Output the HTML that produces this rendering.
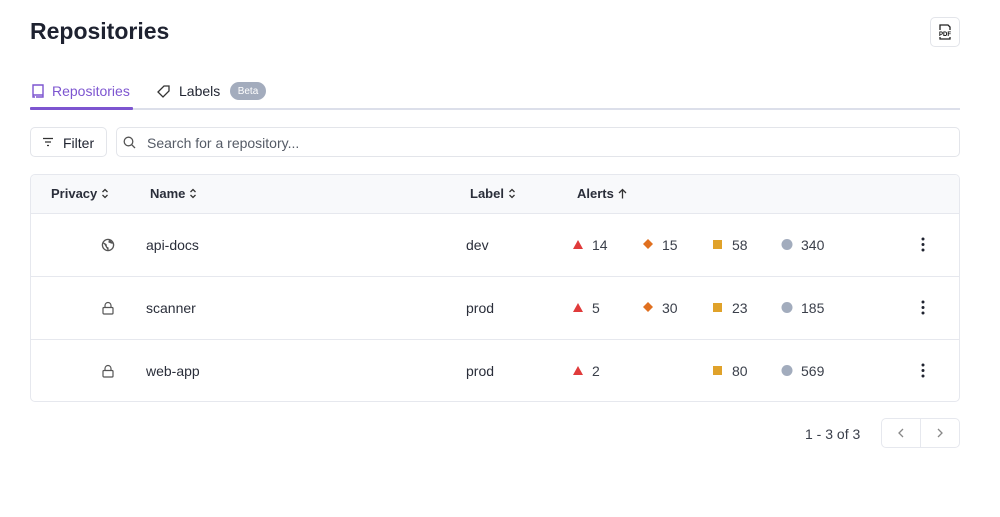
<!DOCTYPE html>
<html><head><style>
*{box-sizing:border-box;margin:0;padding:0}
body{width:1000px;height:517px;background:#fff;font-family:"Liberation Sans",sans-serif;color:#1f2330;position:relative;overflow:hidden}
.a{position:absolute}
h1{position:absolute;left:30px;top:18px;font-size:23px;font-weight:bold;color:#1e2230}
.t{font-size:14px}
.row{position:absolute;left:30px;width:930px;height:63px;border-top:1px solid #e6e8ee}
.c{position:absolute;top:0;line-height:62px;font-size:14px;color:#2a2e3a}
.hd{position:absolute;font-size:13px;font-weight:bold;color:#2a2e3a;top:186px}
.so{display:inline-block;vertical-align:-1px;margin-left:4px}
</style></head><body>
<h1>Repositories</h1>
<div class="a" style="left:930px;top:17px;width:30px;height:30px;border:1px solid #e3e5ea;border-radius:5px">
<svg width="30" height="30" viewBox="0 0 30 30" style="position:absolute;left:-1px;top:-1px"><path d="M10 13V8h8l2 2v3M10 20v2h10v-2" fill="none" stroke="#222" stroke-width="1.3"/><text x="15" y="19" font-size="6" font-weight="bold" text-anchor="middle" font-family="Liberation Sans">PDF</text></svg></div>

<svg class="a" style="left:30px;top:83px" width="16" height="16" viewBox="0 0 16 16"><path d="M3 2h10v10H3zM3 12v2h2M6 14h7v-2" fill="none" stroke="#7d55d0" stroke-width="1.4"/></svg>
<div class="a t" style="left:52px;top:83px;color:#7d55d0">Repositories</div>
<svg class="a" style="left:156px;top:83px" width="16" height="16" viewBox="0 0 16 16"><path d="M2 9l6-6h5v5l-6 6z" fill="none" stroke="#333" stroke-width="1.3"/></svg>
<div class="a t" style="left:179px;top:83px">Labels</div>
<div class="a" style="left:230px;top:82px;width:36px;height:18px;border-radius:9px;background:#a3acbd;color:#fff;font-size:10px;text-align:center;line-height:19px">Beta</div>
<div class="a" style="left:30px;top:108px;width:930px;height:2px;background:#dcdfea"></div>
<div class="a" style="left:30px;top:107px;width:103px;height:3px;background:#7d55d0;border-radius:1px"></div>

<div class="a" style="left:30px;top:127px;width:77px;height:30px;border:1px solid #e3e5ea;border-radius:5px"></div>
<svg class="a" style="left:42px;top:137px" width="12" height="10"><path d="M1 1.5h10M3 5h6M5 8.5h2" stroke="#333" stroke-width="1.3"/></svg>
<div class="a t" style="left:63px;top:135px">Filter</div>
<div class="a" style="left:116px;top:127px;width:844px;height:30px;border:1px solid #e3e5ea;border-radius:5px"></div>
<svg class="a" style="left:123px;top:136px" width="13" height="13"><circle cx="5.5" cy="5.5" r="4.3" fill="none" stroke="#555" stroke-width="1.3"/><path d="M8.7 8.7l3.3 3.3" stroke="#555" stroke-width="1.3"/></svg>
<div class="a t" style="left:147px;top:135px;color:#555b66">Search for a repository...</div>

<div class="a" style="left:30px;top:174px;width:930px;height:228px;border:1px solid #e6e8ee;border-radius:5px;overflow:hidden"><div style="height:39px;background:#f8f9fb"></div></div>
<div class="hd" style="left:51px">Privacy<svg class="so" width="8" height="11"><path d="M1.5 4L4 1.5 6.5 4M1.5 7L4 9.5 6.5 7" fill="none" stroke="#333" stroke-width="1.3"/></svg></div>
<div class="hd" style="left:150px">Name<svg class="so" width="8" height="11"><path d="M1.5 4L4 1.5 6.5 4M1.5 7L4 9.5 6.5 7" fill="none" stroke="#333" stroke-width="1.3"/></svg></div>
<div class="hd" style="left:470px">Label<svg class="so" width="8" height="11"><path d="M1.5 4L4 1.5 6.5 4M1.5 7L4 9.5 6.5 7" fill="none" stroke="#333" stroke-width="1.3"/></svg></div>
<div class="hd" style="left:577px">Alerts<svg class="so" width="9" height="11"><path d="M4.5 10.5V1.5M1 5l3.5-3.5L8 5" fill="none" stroke="#333" stroke-width="1.3"/></svg></div>

<div class="row" style="top:213px">
<svg class="a" style="left:71px;top:24px" width="14" height="14"><circle cx="7" cy="7" r="5.6" fill="none" stroke="#555" stroke-width="1.3"/><path d="M2.5 5l2.5 1.5 0.5 2.5 1.5 1v2.5M8.5 1.8L8 4l2.5 1 1.5 0" fill="#555" stroke="#555" stroke-width="1.2"/></svg>
<div class="c" style="left:116px">api-docs</div><div class="c" style="left:436px">dev</div>
</div>
<div class="row" style="top:276px">
<svg class="a" style="left:71px;top:24px" width="14" height="14"><rect x="2" y="6.5" width="10" height="6.5" rx="1" fill="none" stroke="#555" stroke-width="1.2"/><path d="M4 6.5V4.5a3 3 0 0 1 6 0v2" fill="none" stroke="#555" stroke-width="1.2"/></svg>
<div class="c" style="left:116px">scanner</div><div class="c" style="left:436px">prod</div>
</div>
<div class="row" style="top:339px">
<svg class="a" style="left:71px;top:24px" width="14" height="14"><rect x="2" y="6.5" width="10" height="6.5" rx="1" fill="none" stroke="#555" stroke-width="1.2"/><path d="M4 6.5V4.5a3 3 0 0 1 6 0v2" fill="none" stroke="#555" stroke-width="1.2"/></svg>
<div class="c" style="left:116px">web-app</div><div class="c" style="left:436px">prod</div>
</div>

<svg class="a" style="left:0;top:213px" width="1000" height="189">
<g fill="#e03b3b"><path d="M573 36l5-9 5 9z"/><path d="M573 99l5-9 5 9z"/><path d="M573 162l5-9 5 9z"/></g>
<g fill="#e07020"><path d="M648 26l5 5-5 5-5-5z"/><path d="M648 89l5 5-5 5-5-5z"/></g>
<g fill="#e0a22a"><rect x="713" y="27" width="9" height="9"/><rect x="713" y="90" width="9" height="9"/><rect x="713" y="153" width="9" height="9"/></g>
<g fill="#a2acbd"><circle cx="787" cy="31.5" r="5.5"/><circle cx="787" cy="94.5" r="5.5"/><circle cx="787" cy="157.5" r="5.5"/></g>
<g fill="#1f2330"><circle cx="923" cy="26" r="1.5"/><circle cx="923" cy="31.5" r="1.5"/><circle cx="923" cy="37" r="1.5"/><circle cx="923" cy="89" r="1.5"/><circle cx="923" cy="94.5" r="1.5"/><circle cx="923" cy="100" r="1.5"/><circle cx="923" cy="152" r="1.5"/><circle cx="923" cy="157.5" r="1.5"/><circle cx="923" cy="163" r="1.5"/></g>
<g font-family="Liberation Sans" font-size="14" fill="#3a3f4a">
<text x="592" y="37">14</text><text x="662" y="37">15</text><text x="732" y="37">58</text><text x="801" y="37">340</text>
<text x="592" y="100">5</text><text x="662" y="100">30</text><text x="732" y="100">23</text><text x="801" y="100">185</text>
<text x="592" y="163">2</text><text x="732" y="163">80</text><text x="801" y="163">569</text>
</g>
</svg>

<div class="a t" style="left:805px;top:426px;color:#3a3f4a">1 - 3 of 3</div>
<div class="a" style="left:881px;top:418px;width:79px;height:30px;border:1px solid #e6e8ee;border-radius:5px"></div>
<div class="a" style="left:920px;top:418px;width:1px;height:30px;background:#e6e8ee"></div>
<svg class="a" style="left:881px;top:418px" width="79" height="30"><path d="M22 11l-4 4 4 4M57 11l4 4-4 4" fill="none" stroke="#888" stroke-width="1.3"/></svg>
</body></html>
